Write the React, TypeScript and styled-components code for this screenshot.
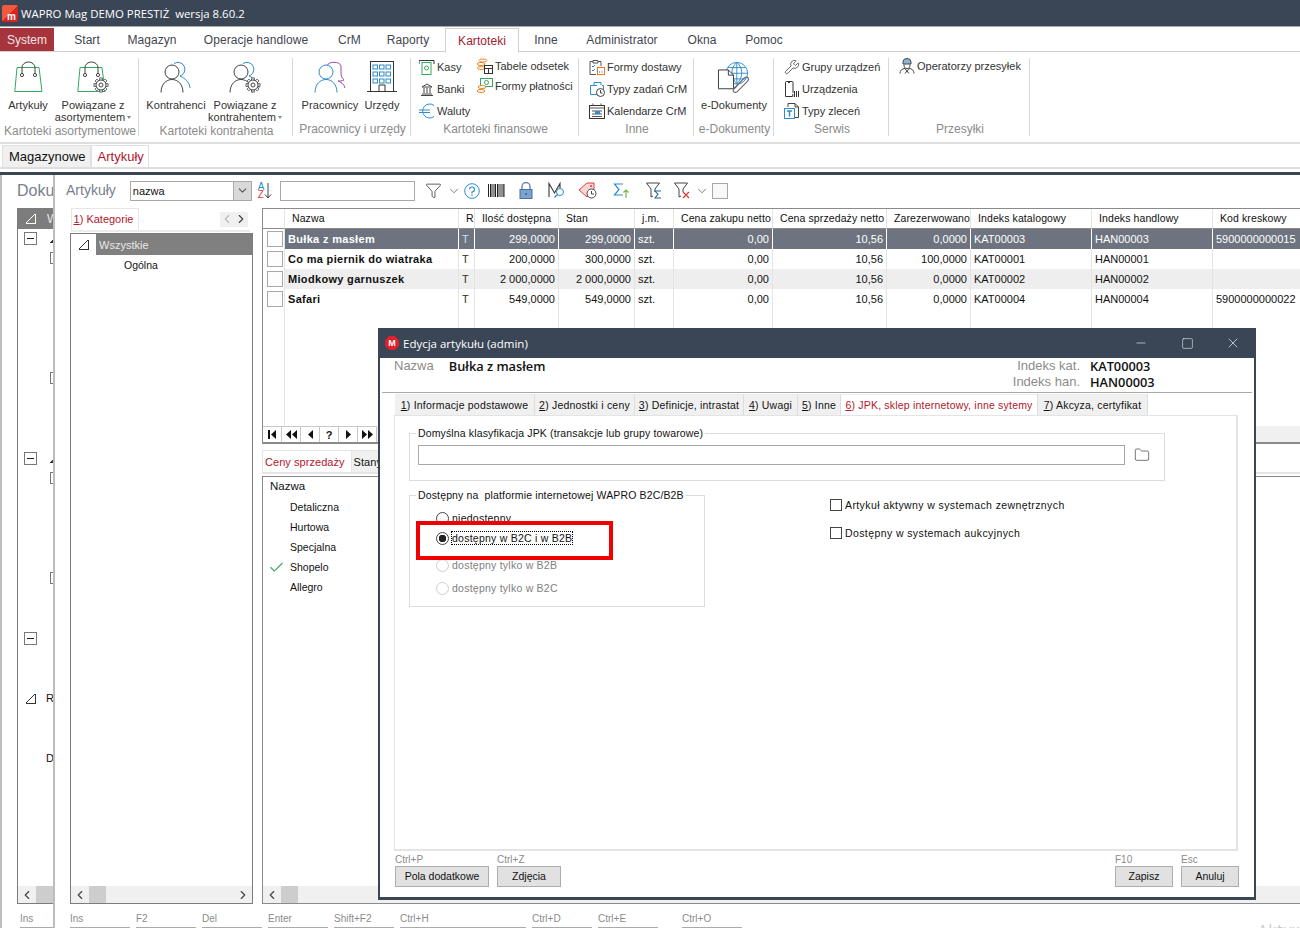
import React from "react";
import styled, { createGlobalStyle, css } from "styled-components";
import { Check, ChevronDown, ChevronLeft, ChevronRight, Folder, Funnel, Minus, Square, Wrench, X } from "lucide-react";

const Global = createGlobalStyle`
  html, body { margin: 0; padding: 0; background: #fff; }
  * { box-sizing: border-box; }
  body { font-family: "Liberation Sans", Arial, sans-serif; font-size: 11px; color: #111; }
`;

const DARK = "#3a4656";
const UI = `"Open Sans", "Liberation Sans", sans-serif`;

const Page = styled.div`
  position: relative;
  width: 1300px;
  height: 928px;
  overflow: hidden;
  display: flex;
  flex-direction: column;
  background: #fff;
`;

const TitleBar = styled.div`
  height: 27px;
  flex: none;
  background: ${DARK};
  border-bottom: 1px solid #a9a9a9;
  color: #fff;
  display: flex;
  align-items: center;
  gap: 3px;
  padding-left: 2px;
  font: 11.4px ${UI};
`;

const AppLogo = styled.span`
  width: 16px;
  height: 17px;
  border-radius: 2px;
  background: linear-gradient(135deg, #ef5a3c 50%, #d92222 50%);
  color: #fff;
  font: bold 10px "Liberation Sans", sans-serif;
  display: flex;
  align-items: flex-end;
  justify-content: flex-end;
  padding: 0 2px;
`;

const MenuBar = styled.div`
  height: 25px;
  flex: none;
  display: flex;
  border-bottom: 1px solid #d0d0d0;
  font: 12px "Liberation Sans", sans-serif;
  letter-spacing: 0.05px;
  color: #3f4650;
  padding-top: 1px;
`;

const MenuItem = styled.div<{ $x: number; $active?: boolean; $system?: boolean }>`
  flex: none;
  width: ${(p) => p.$x}px;
  display: flex;
  align-items: center;
  justify-content: center;
  ${(p) =>
    p.$active &&
    css`
      color: #a11c30;
      border: 1px solid #d0d0d0;
      border-bottom: 1px solid #fff;
      height: 25px;
      background: #fff;
    `}
  ${(p) =>
    p.$system &&
    css`
      background: #a5343c;
      color: #f3e3e3;
      height: 23px;
      letter-spacing: 0;
    `}
`;

const Ribbon = styled.div`
  height: 92px;
  flex: none;
  display: flex;
  padding-top: 6px;
  border-bottom: 2px solid #dedede;
`;

const RibbonGroup = styled.div<{ $w: number }>`
  flex: none;
  width: ${(p) => p.$w}px;
  height: 78px;
  border-right: 1px solid #d8d8d8;
  display: flex;
  flex-direction: column;
`;

const GroupBody = styled.div<{ $pl?: number; $pt?: number }>`
  height: 64px;
  display: flex;
  padding-left: ${(p) => p.$pl ?? 0}px;
  padding-top: ${(p) => p.$pt ?? 0}px;
`;

const GroupLabel = styled.div`
  height: 14px;
  margin-top: 2px;
  padding-left: 2px;
  text-align: center;
  white-space: nowrap;
  color: #8b8b8b;
  font: 12px "Liberation Sans", sans-serif;
`;

const BigItem = styled.div<{ $w: number }>`
  flex: none;
  width: ${(p) => p.$w}px;
  display: flex;
  flex-direction: column;
  align-items: center;
  white-space: nowrap;
  color: #333;
  font-size: 11px;
  line-height: 12px;
  letter-spacing: 0.06px;
  svg.big { height: 32px; margin: 3px 0 6px; flex: none; }
`;

const Caret = styled.span`
  display: inline-block;
  margin-left: 2px;
  vertical-align: 2px;
  border: 2.5px solid transparent;
  border-top: 3px solid #888;
  border-bottom: 0;
`;

const SmallStack = styled.div<{ $step?: number; $w?: number; $pt?: number }>`
  display: flex;
  flex-direction: column;
  flex: none;
  gap: ${(p) => p.$step ?? 6}px;
  padding-top: ${(p) => p.$pt ?? 0}px;
  ${(p) => p.$w && `width: ${p.$w}px;`}
`;

const SmallItem = styled.div`
  height: 16px;
  display: flex;
  align-items: center;
  gap: 2px;
  white-space: nowrap;
  color: #333;
  font-size: 11px;
  svg { flex: none; width: 16px; height: 16px; }
`;

const TabStrip = styled.div`
  height: 25px;
  flex: none;
  display: flex;
  align-items: flex-end;
  border-bottom: 2px solid #dedede;
  padding-left: 2px;
`;

const TopTab = styled.div<{ $active?: boolean }>`
  height: 22px;
  padding: 0 4px 0 6px;
  display: flex;
  align-items: center;
  font: 13px "Liberation Sans", sans-serif;
  color: ${(p) => (p.$active ? "#b3152c" : "#111")};
  background: ${(p) => (p.$active ? "#fff" : "#f0f0f0")};
  border: 1px solid #e0e0e0;
  border-bottom: 0;
`;

const DarkRule = styled.div`
  height: 6px;
  flex: none;
  background: linear-gradient(#fff 0, #fff 3px, ${DARK} 3px);
`;

const Main = styled.div`
  flex: 1;
  min-height: 0;
  display: flex;
`;

const DocPanel = styled.div`
  width: 53px;
  flex: none;
  display: flex;
  flex-direction: column;
  border-left: 2px solid #bdbdbd;
  padding-left: 15px;
  overflow: hidden;
`;

const PanelTitle = styled.div`
  height: 33px;
  flex: none;
  display: flex;
  align-items: center;
  font: 16px "Liberation Sans", sans-serif;
  color: #78808c;
  white-space: nowrap;
  padding-bottom: 2px;
`;

const ArticlesTitle = styled(PanelTitle)`
  font-size: 14px;
`;

const DocTree = styled.div`
  height: 696px;
  flex: none;
  width: 46px;
  border: 1px solid #7c7c7c;
  display: flex;
  flex-direction: column;
`;

const DocHead = styled.div`
  height: 20px;
  flex: none;
  background: #7d7d7d;
  color: #e9e9e9;
  display: flex;
  align-items: center;
  padding-left: 8px;
  gap: 11px;
  font-size: 12px;
  white-space: nowrap;
`;

const Corner = styled.span<{ $dark?: boolean }>`
  display: inline-block;
  width: 10px;
  height: 10px;
  flex: none;
  background: linear-gradient(135deg, transparent 46%, ${(p) => (p.$dark ? "#333" : "#fff")} 46%, ${(p) => (p.$dark ? "#333" : "#fff")} 54%, transparent 54%);
  border-bottom: 1px solid ${(p) => (p.$dark ? "#333" : "#fff")};
  border-right: 1px solid ${(p) => (p.$dark ? "#333" : "#fff")};
`;

const TreeCorner = styled(Corner)<{ $y: number }>`
  position: absolute;
  left: 8px;
  top: ${(p) => p.$y}px;
`;

const DocBody = styled.div`
  flex: 1;
  position: relative;
`;

const Expander = styled.span<{ $y: number }>`
  position: absolute;
  left: 6px;
  top: ${(p) => p.$y}px;
  width: 13px;
  height: 13px;
  border: 1px solid #777;
  background: #fff;
  &::after {
    content: "";
    position: absolute;
    left: 2px;
    right: 2px;
    top: 5px;
    height: 1px;
    background: #222;
  }
`;

const TinyBox = styled.span<{ $y: number }>`
  position: absolute;
  left: 32px;
  top: ${(p) => p.$y}px;
  width: 12px;
  height: 12px;
  border: 1px solid #777;
`;

const Notch = styled.span<{ $y: number }>`
  position: absolute;
  left: 31px;
  top: ${(p) => p.$y}px;
  width: 4px;
  height: 3px;
  background: linear-gradient(135deg, transparent 50%, #333 50%);
`;

const TreeLetter = styled.span<{ $y: number; $x: number }>`
  position: absolute;
  left: ${(p) => p.$x}px;
  top: ${(p) => p.$y}px;
  font-size: 11px;
`;

const ScrollBar = styled.div`
  height: 17px;
  flex: none;
  background: #f0f0f0;
  display: flex;
  align-items: center;
  color: #444;
  svg { width: 14px; height: 14px; flex: none; margin: 0 2px; }
`;

const Thumb = styled.span`
  width: 17px;
  height: 17px;
  flex: none;
  background: #cdcdcd;
`;

const Spacer = styled.span`
  flex: 1;
`;

const ArticlesPanel = styled.div`
  flex: 1;
  min-width: 0;
  display: flex;
  flex-direction: column;
  border-left: 2px solid #bdbdbd;
`;

const Toolbar = styled.div`
  height: 33px;
  flex: none;
  display: flex;
  align-items: center;
  padding: 0 0 2px 11px;
  white-space: nowrap;
`;

const ToolIcon = styled.span<{ $l: number }>`
  margin-left: ${(p) => p.$l}px;
  display: flex;
  flex: none;
  svg { display: block; }
`;

const SelectBox = styled.div`
  width: 122px;
  height: 20px;
  margin-left: 14px;
  border: 1px solid #a8a8a8;
  display: flex;
  align-items: center;
  justify-content: space-between;
  padding-left: 2px;
  font-size: 11px;
`;

const SelectArrow = styled.span`
  width: 18px;
  height: 18px;
  background: #d9d9d9;
  border-left: 1px solid #aaa;
  display: flex;
  align-items: center;
  justify-content: center;
  svg { width: 13px; height: 13px; color: #555; }
`;

const SortIcon = styled.span`
  margin-left: 6px;
  width: 16px;
  display: flex;
  align-items: center;
  gap: 0;
`;

const SortLetters = styled.span`
  display: flex;
  flex-direction: column;
  font-size: 10px;
  line-height: 8px;
  color: #2d8ccb;
  b { font-weight: normal; color: #e23b3b; }
`;

const SearchBox = styled.div`
  width: 135px;
  height: 20px;
  margin-left: 6px;
  border: 1px solid #a8a8a8;
`;

const EmptyCheck = styled.span`
  margin-left: 3px;
  width: 16px;
  height: 16px;
  border: 1px solid #a8a8a8;
  background: #f8f8f8;
  flex: none;
`;

const Content = styled.div`
  height: 696px;
  flex: none;
  display: flex;
  padding-left: 15px;
`;

const CategoryColumn = styled.div`
  width: 183px;
  flex: none;
  display: flex;
  flex-direction: column;
`;

const CategoryTabs = styled.div`
  height: 24px;
  flex: none;
  display: flex;
  align-items: flex-start;
  justify-content: space-between;
  margin: 0 3px 1px 1px;
  border-bottom: 2px solid #ececec;
`;

const CategoryTab = styled.div`
  height: 22px;
  width: 68px;
  display: flex;
  align-items: center;
  justify-content: center;
  padding: 0 3px 2px 0;
  color: #b3152c;
  font-size: 11px;
  border: 1px solid #e6e6e6;
  border-bottom: 0;
  background: #fff;
`;

const TabArrows = styled.div`
  margin: 4px 2px 0 0;
  width: 28px;
  height: 15px;
  background: #f0f0f0;
  display: flex;
  justify-content: space-between;
  svg { width: 14px; height: 14px; }
`;

const CategoryTree = styled.div`
  flex: 1;
  border: 1px solid #7c7c7c;
  display: flex;
  flex-direction: column;
`;

const TreeRoot = styled.div`
  height: 21px;
  flex: none;
  display: flex;
  align-items: center;
  padding-left: 8px;
`;

const TreeRootLabel = styled.div`
  margin-left: 7px;
  flex: 1;
  height: 21px;
  background: #808080;
  color: #e8e8e8;
  display: flex;
  align-items: center;
  padding-left: 3px;
  font-size: 11px;
`;

const TreeLeaf = styled.div`
  height: 19px;
  flex: none;
  display: flex;
  align-items: center;
  padding-left: 53px;
  font-size: 10.5px;
`;

const GridColumn = styled.div`
  margin-left: 9px;
  flex: 1;
  min-width: 0;
  display: flex;
  flex-direction: column;
`;

const COLS = "22px 174px 16px 84px 76px 39px 99px 114px 84px 121px 121px 100px";

const ArticleTable = styled.div`
  height: 218px;
  flex: none;
  border: 1px solid #8b8b8b;
  border-width: 1px 0 0 1px;
  display: grid;
  grid-template-rows: 20px 20px 20px 20px 20px 1fr;
  overflow: hidden;
`;

const TableRow = styled.div<{ $tone?: "sel" | "alt" }>`
  display: grid;
  grid-template-columns: ${COLS};
  min-width: 0;
  ${(p) => p.$tone === "alt" && "background: #eee;"}
`;

const HeadCell = styled.div`
  border-right: 1px solid #e4e4e0;
  border-bottom: 1px solid #8b8b8b;
  padding: 0 0 2px 7px;
  display: flex;
  align-items: center;
  white-space: nowrap;
  overflow: hidden;
  font-size: 10.5px;
  letter-spacing: 0.1px;
  color: #111;
`;

const Cell = styled.div<{ $right?: boolean; $sel?: boolean; $tint?: string }>`
  border-right: 1px solid ${(p) => (p.$sel ? "#fff" : "#e4e4e0")};
  padding: 0 3px;
  display: flex;
  align-items: center;
  justify-content: ${(p) => (p.$right ? "flex-end" : "flex-start")};
  white-space: nowrap;
  overflow: hidden;
  font-size: 11px;
  color: ${(p) => p.$tint ?? (p.$sel ? "#fff" : "#111")};
  background: ${(p) => (p.$sel ? "#6d7480" : "transparent")};
`;

const NameCell = styled(Cell)`
  font-weight: bold;
  letter-spacing: 0.32px;
`;

const MarkCell = styled.div`
  border-right: 1px solid #e4e4e0;
  background: #fff;
  display: flex;
  align-items: center;
  justify-content: center;
  padding-left: 2px;
  span {
    width: 16px;
    height: 16px;
    border: 1px solid #a8a8a8;
    background: #fdfdfd;
  }
`;

const Navigator = styled.div`
  height: 18px;
  flex: none;
  border-left: 1px solid #8b8b8b;
  border-bottom: 2px solid #8b8b8b;
  background: #f0f0f0;
  display: flex;
`;

const NavButton = styled.div`
  width: 19px;
  background: #fff;
  border-right: 1px solid #c8c8c8;
  border-top: 1px solid #c8c8c8;
  display: flex;
  align-items: center;
  justify-content: center;
  font: bold 11px "Liberation Sans", sans-serif;
  svg { display: block; }
`;

const SubTabs = styled.div`
  margin-top: 6px;
  height: 24px;
  flex: none;
  display: flex;
  border-bottom: 2px solid #e4e4e4;
  align-items: stretch;
`;

const SubTab = styled.div<{ $active?: boolean }>`
  padding: 0 6px 0 2px;
  display: flex;
  align-items: center;
  font-size: 11px;
  letter-spacing: 0.05px;
  white-space: nowrap;
  color: ${(p) => (p.$active ? "#b3152c" : "#111")};
  background: ${(p) => (p.$active ? "#fff" : "#f0f0f0")};
  border: 1px solid #e4e4e4;
  border-bottom: 0;
  ${(p) => !p.$active && "border-left: 0;"}
`;

const PriceList = styled.div`
  flex: 1;
  margin-top: 2px;
  border: 1px solid #8b8b8b;
  border-right: 0;
  display: flex;
  flex-direction: column;
`;

const PriceHead = styled.div`
  height: 20px;
  flex: none;
  padding: 0 0 3px 7px;
  display: flex;
  align-items: center;
  font-size: 11.5px;
`;

const PriceRow = styled.div`
  height: 20px;
  flex: none;
  display: flex;
  align-items: center;
  font-size: 10.5px;
  color: #111;
`;

const CheckSlot = styled.span`
  width: 27px;
  flex: none;
  display: flex;
  justify-content: center;
  svg { width: 17px; height: 17px; color: #2eab5f; }
`;

const Shortcuts = styled.div<{ $pl?: number }>`
  flex: 1;
  display: flex;
  padding: 9px 0 0 ${(p) => p.$pl ?? 0}px;
`;

const Shortcut = styled.div<{ $w: number; $btn: number; $down?: boolean }>`
  flex: none;
  width: ${(p) => p.$w}px;
  color: #8b8b8b;
  font-size: 10px;
  line-height: 12px;
  &::after {
    content: "";
    display: block;
    margin-top: 2px;
    width: ${(p) => p.$btn}px;
    height: 10px;
    background: ${(p) => (p.$down ? "#cfcfcf" : "#e2e2e2")};
    border: 1px solid #aaa;
  }
`;

const Watermark = styled.div`
  position: absolute;
  left: 1258px;
  top: 919px;
  font: 15px "Open Sans", sans-serif;
  letter-spacing: 1px;
  color: #c8c8c8;
`;

const Dialog = styled.div`
  position: absolute;
  left: 378px;
  top: 328px;
  width: 878px;
  height: 572px;
  background: #fff;
  border: 2px solid ${DARK};
  border-top: 0;
  border-bottom-width: 3px;
  display: flex;
  flex-direction: column;
`;

const DialogTitle = styled.div`
  height: 30px;
  flex: none;
  margin: 0 -2px;
  background: ${DARK};
  color: #fff;
  display: flex;
  align-items: center;
  padding-left: 7px;
  gap: 4px;
  font: 11.5px ${UI};
`;

const DialogLogo = styled.span`
  width: 14px;
  height: 14px;
  background: #e0202c;
  clip-path: polygon(30% 0, 70% 0, 100% 30%, 100% 70%, 70% 100%, 30% 100%, 0 70%, 0 30%);
  color: #fff;
  font: bold 9px "Liberation Sans", sans-serif;
  display: flex;
  align-items: center;
  justify-content: center;
`;

const WindowButtons = styled.div`
  margin-left: auto;
  display: flex;
  align-items: center;
  color: #fff;
`;

const WindowButton = styled.span`
  width: 46px;
  display: flex;
  justify-content: center;
  svg { display: block; }
`;

const DialogHead = styled.div`
  height: 35px;
  flex: none;
  margin: 0 2px;
  border-bottom: 1px solid #a9a9a9;
  display: flex;
  justify-content: space-between;
  padding: 0 0 0 12px;
`;

const NameLine = styled.div`
  display: flex;
  align-items: flex-start;
  gap: 15px;
`;

const HeadCaption = styled.span`
  font: 13px "Liberation Sans", sans-serif;
  line-height: 16px;
  color: #8b8b8b;
`;

const HeadValue = styled.span`
  font: 600 12.8px "Open Sans", sans-serif;
  line-height: 17px;
  color: #111;
`;

const IndexTable = styled.div`
  display: grid;
  grid-template-columns: auto 162px;
  column-gap: 10px;
  justify-items: end;
  grid-auto-rows: 16px;
  span:nth-child(2n) { justify-self: start; }
`;

const DialogTabs = styled.div`
  height: 21px;
  flex: none;
  margin: 1px 0 0 15px;
  display: flex;
`;

const DialogTab = styled.div<{ $w: number; $active?: boolean }>`
  flex: none;
  width: ${(p) => p.$w}px;
  display: flex;
  align-items: center;
  justify-content: center;
  white-space: nowrap;
  font-size: 10.5px;
  letter-spacing: 0.2px;
  color: ${(p) => (p.$active ? "#b3152c" : "#111")};
  background: ${(p) => (p.$active ? "#fff" : "#f0f0f0")};
  border-right: 1px solid #ddd;
  border-top: 1px solid #ececec;
  u { text-underline-offset: 1px; }
`;

const TabPage = styled.div`
  height: 436px;
  flex: none;
  margin: 0 16px 0 14px;
  border: 2px solid #e4e4e4;
  border-width: 1px 2px 2px 1px;
  padding: 11px 0 0 14px;
`;

const GroupBox = styled.fieldset<{ $w: number; $h: number }>`
  margin: 0;
  width: ${(p) => p.$w}px;
  height: ${(p) => p.$h}px;
  padding: 0;
  border: 1px solid #dcdcdc;
  min-inline-size: 0;
  legend {
    margin-left: 6px;
    padding: 0 2px;
    font-size: 10.5px;
    line-height: 13px;
    letter-spacing: 0.14px;
    color: #111;
    white-space: pre;
  }
`;

const PathRow = styled.div`
  display: flex;
  align-items: center;
  padding: 5px 0 0 8px;
  gap: 9px;
  svg { width: 16px; height: 16px; color: #333; }
`;

const PathInput = styled.div`
  width: 707px;
  height: 20px;
  border: 1px solid #a8a8a8;
`;

const LowerRow = styled.div`
  display: flex;
  margin-top: 8px;
`;

const RadioColumn = styled.div`
  padding: 9px 0 0 26px;
  display: flex;
  flex-direction: column;
`;

const RadioLine = styled.div<{ $mt?: number; $off?: boolean }>`
  height: 14px;
  margin-top: ${(p) => p.$mt ?? 0}px;
  display: flex;
  align-items: center;
  gap: 3px;
  white-space: nowrap;
  font-size: 10.5px;
  letter-spacing: 0.24px;
  color: ${(p) => (p.$off ? "#808080" : "#111")};
`;

const RadioDot = styled.span<{ $on?: boolean; $off?: boolean }>`
  width: 13px;
  height: 13px;
  flex: none;
  border-radius: 50%;
  border: 1px solid ${(p) => (p.$off ? "#cfcfcf" : "#444")};
  background: ${(p) => (p.$on ? "radial-gradient(circle, #222 0 3.5px, #fff 4px)" : "#fff")};
`;

const FocusText = styled.span`
  outline: 1px dotted #000;
`;

const CheckColumn = styled.div`
  margin-left: 125px;
  padding-top: 10px;
  display: flex;
  flex-direction: column;
  gap: 16px;
`;

const CheckLine = styled.div`
  height: 12px;
  display: flex;
  align-items: center;
  gap: 3px;
  font-size: 10.5px;
  letter-spacing: 0.4px;
  color: #111;
  white-space: nowrap;
  span {
    width: 12px;
    height: 12px;
    border: 1px solid #444;
  }
`;

const Callout = styled.div`
  position: absolute;
  left: 36px;
  top: 193px;
  width: 197px;
  height: 39px;
  border: 4px solid #f00000;
  pointer-events: none;
`;

const DialogFooter = styled.div`
  flex: 1;
  display: flex;
  padding: 2px 15px 0 15px;
  gap: 8px;
`;

const FooterAction = styled.div`
  display: flex;
  flex-direction: column;
  color: #8b8b8b;
  font-size: 10px;
  line-height: 13px;
`;

const ActionButton = styled.div<{ $w: number }>`
  width: ${(p) => p.$w}px;
  height: 21px;
  background: #e1e1e1;
  border: 1px solid #adadad;
  color: #111;
  font-size: 10.5px;
  display: flex;
  align-items: center;
  justify-content: center;
`;

const Line: React.FC<{ d: string; c?: string; w?: number }> = ({ d, c = "#444", w = 1 }) => (
  <path d={d} fill="none" stroke={c} strokeWidth={w} />
);

const Gear: React.FC<{ x: number; y: number }> = ({ x, y }) => (
  <g transform={`translate(${x} ${y})`}>
    {[0, 45, 90, 135].map((a) => (
      <rect key={a} x={-1.3} y={-7} width={2.6} height={14} fill="#fff" stroke="#444" strokeWidth={0.8} transform={`rotate(${a})`} />
    ))}
    <circle r={5} fill="#fff" stroke="#444" />
    <circle r={2} fill="#fff" stroke="#444" />
  </g>
);

const Bag: React.FC<{ gear?: boolean }> = ({ gear }) => (
  <svg className="big" width={gear ? 32 : 29} height="32" viewBox={`0 0 ${gear ? 32 : 29} 32`}>
    <path d="M3 6.500H25L28 30.500H0.800Z" fill="#fff" stroke="#2eab5f" />
    <Line d="M8 13V6.500a6.500 5.500 0 0 1 13 0V13" />
    <circle cx="8" cy="14" r="1.600" fill="#fff" stroke="#444" />
    <circle cx="21" cy="14" r="1.600" fill="#fff" stroke="#444" />
    {gear && <Gear x={24} y={24} />}
  </svg>
);

const Person: React.FC<{ c: string }> = ({ c }) => (
  <g>
    <circle cx="12" cy="11" r="7" fill="#fff" stroke={c} />
    <path d="M1 31.500c0-8 5-13 11-13s11 5 11 13" fill="none" stroke={c} />
  </g>
);

const People: React.FC<{ gear?: boolean }> = ({ gear }) => (
  <svg className="big" width="32" height="32" viewBox="0 0 32 32">
    <Line d="M14 2.500a7 7 0 1 1 6 12.500c5 2 10 7 10 12" c="#2d8ccb" />
    <Person c="#444" />
    {gear && <Gear x={24} y={24} />}
  </svg>
);

const Staff = () => (
  <svg className="big" width="32" height="32" viewBox="0 0 32 32">
    <Line d="M13 5c1-5 13-5 14 0v7c0 3 1 5 3 7-2 1-4 1-6 1 3 1 6 3 7 7" c="#9b4d9b" />
    <Person c="#2d8ccb" />
  </svg>
);

const Building = () => (
  <svg className="big" width="30" height="32" viewBox="0 0 30 32">
    <rect x="3.500" y="0.500" width="23" height="30" fill="none" stroke="#333" />
    <Line d="M0 30.500H30M12 30.500V24H18V30.500" c="#333" />
    {[4, 11, 18].map((y) =>
      [6, 12.5, 19].map((x) => <rect key={`${x}${y}`} x={x} y={y} width="4.500" height="4" fill="none" stroke="#2d8ccb" />),
    )}
  </svg>
);

const Kasy = () => (
  <svg viewBox="0 0 16 16">
    <Line d="M0 1.500H15M0 1.500V5M15 1.500V5" c="#333" />
    <rect x="3" y="3.500" width="9" height="12" fill="none" stroke="#2eab5f" />
    <circle cx="7.500" cy="9" r="2" fill="none" stroke="#2eab5f" />
  </svg>
);
const Banki = () => (
  <svg viewBox="0 0 16 16">
    <Line d="M3 6 8 3l5 3H3ZM3 13h10M2 14.500h12M5 7v5M8 7v5M11 7v5" />
  </svg>
);
const Euro = () => (
  <svg viewBox="0 0 16 16">
    <Line d="M15 2.500A7 7 0 1 0 15 13.500M0 7H11M0 9.500H11" c="#2d8ccb" />
  </svg>
);
const Coins = () => (
  <svg viewBox="0 0 16 16">
    <ellipse cx="6" cy="2.500" rx="4" ry="1.500" fill="none" stroke="#e88a2a" />
    <ellipse cx="4" cy="6" rx="4" ry="1.500" fill="none" stroke="#e88a2a" />
    <ellipse cx="4" cy="10" rx="3.500" ry="1.500" fill="none" stroke="#e88a2a" />
    <rect x="7.500" y="7.500" width="8" height="8" fill="#fff" stroke="#333" />
    <Line d="M7.500 10.500H15.500M11.500 10.500V15.500" c="#333" />
  </svg>
);
const CashCoins = () => (
  <svg viewBox="0 0 16 16">
    <rect x="3.500" y="0.500" width="12" height="8" fill="none" stroke="#2eab5f" />
    <circle cx="9.500" cy="4.500" r="2" fill="none" stroke="#2eab5f" />
    <ellipse cx="5" cy="9" rx="4" ry="1.500" fill="#fff" stroke="#e88a2a" />
    <ellipse cx="4" cy="13" rx="4" ry="1.500" fill="#fff" stroke="#e88a2a" />
  </svg>
);
const Delivery = () => (
  <svg viewBox="0 0 16 16">
    <Line d="M9 2.500H12V7M4 2.500H1V15.500H7M4 1.500H9V4H4Z" c="#555" />
    <Line d="M3 7l1 1 2-2M3 11l1 1 2-2" c="#2d8ccb" />
    <rect x="8.500" y="8.500" width="7" height="7" fill="#fff" stroke="#e8792a" />
    <Line d="M10 13h1M12.500 13h1" c="#555" />
  </svg>
);
const TaskTypes = () => (
  <svg viewBox="0 0 16 16">
    <Line d="M5 4V1.500H12V4M8 4.500H1.500V13.500H8M13 4.500H14.500V8" c="#2d8ccb" />
    <circle cx="11.500" cy="11.500" r="4" fill="#fff" stroke="#444" />
    <Line d="M11.500 9v3h2" />
  </svg>
);
const Calendar = () => (
  <svg viewBox="0 0 16 16">
    <rect x="0.500" y="2.500" width="15" height="13" fill="#fff" stroke="#333" />
    <Line d="M0.500 5H15.500M4 0.500V3M12 0.500V3M3 8H13M3 11H13M3 13.500H13" c="#555" />
    <rect x="6" y="8" width="5" height="3" fill="#2d8ccb" />
  </svg>
);
const DeviceBars = () => (
  <svg viewBox="0 0 16 16">
    <Line d="M9 12V1.500a1 1 0 0 0-1-1H2.500a1 1 0 0 0-1 1V15.500H8M4 1.500h2" c="#333" />
    <Line d="M10.500 10V16M12.500 10V16M14.500 10V16M8.800 13V16" c="#333" />
  </svg>
);
const Orders = () => (
  <svg viewBox="0 0 16 16">
    <Line d="M4 4V0.500H11L14.500 4V14.500H11M11 .5V4H14.500" />
    <rect x="0.500" y="5.500" width="10" height="10" fill="#fff" stroke="#2d8ccb" />
    <Line d="M3 8h5M5.500 8V13.500" c="#2d8ccb" w={1.500} />
  </svg>
);
const Courier = () => (
  <svg viewBox="0 0 16 16">
    <path d="M4 4a4 3.500 0 0 1 8 0v2H4Z" fill="#8fb5d6" stroke="#444" />
    <Line d="M5 6.500c0 3 1 4 3 4s3-1 3-4M1 15.500c0-3 2-5 5-5l2 3 2-3c3 0 5 2 5 5M6 15.500 8 13l2 2.500" />
  </svg>
);
const EDoc = () => (
  <svg className="big" width="36" height="32" viewBox="0 0 36 34">
    <circle cx="21" cy="13" r="11.500" fill="none" stroke="#2d8ccb" />
    <Line d="M21 1.500V24M9.500 13H32.500M21 1.500c-7 6-7 16 0 22.500M21 1.500c7 6 7 16 0 22.500M11.500 7H30.500M11.500 19H30.500" c="#2d8ccb" />
    <path d="M1.500 9.500H12L17.500 15V29.500H1.500Z" fill="#fff" stroke="#333" />
    <Line d="M12 9.500V15H17.500" c="#333" />
    <Line d="M18 30 29 18c3-3 6 1 3 4L21 33c-3 1-5-1-3-4L27 20" c="#666" w={1.200} />
  </svg>
);

const Barcode = () => (
  <svg width="17" height="15" viewBox="0 0 17 15">
    {[0.5, 2.5, 4, 6, 7.5, 9.5, 11, 13, 15, 16].map((x) => (
      <line key={x} x1={x} x2={x} y1="1" y2="14" stroke="#222" />
    ))}
  </svg>
);
const Help = () => (
  <svg width="16" height="16" viewBox="0 0 16 16">
    <circle cx="8" cy="8" r="7.300" fill="none" stroke="#2d8ccb" />
    <Line d="M5.500 6.200A2.500 2.500 0 1 1 8 9V10.500M8 11.500V13" c="#2d8ccb" w={1.200} />
  </svg>
);
const Padlock = () => (
  <svg width="14" height="17" viewBox="0 0 14 17">
    <Line d="M3 8V4.500a4 4 0 0 1 8 0V8" c="#5b7fb0" w={1.300} />
    <rect x="1" y="7.500" width="12" height="9" fill="#7ea2cf" stroke="#4b6fa0" />
    <rect x="6" y="11" width="2" height="2" fill="#4b6fa0" />
  </svg>
);
const MLens = () => (
  <svg width="18" height="17" viewBox="0 0 18 17">
    <Line d="M1 15V1.500L6.500 11 12 1.500V7" c="#333" w={1.100} />
    <circle cx="12" cy="10" r="3.500" fill="#fff" stroke="#2d8ccb" />
    <Line d="M9.500 12.500 6.500 15.500" c="#2d8ccb" w={1.300} />
  </svg>
);
const TagClock = () => (
  <svg width="19" height="17" viewBox="0 0 19 17">
    <path d="M1 8 9 1h7v7l-7 7Z" fill="#fbd6d6" stroke="#e23b3b" />
    <circle cx="13" cy="4" r="1" fill="#e23b3b" />
    <circle cx="13.500" cy="11.500" r="4.500" fill="#fff" stroke="#444" />
    <Line d="M13.500 9v3h2.500" />
  </svg>
);
const SigmaUp = () => (
  <svg width="17" height="17" viewBox="0 0 17 17">
    <Line d="M10 2H1.500L6 7.500 1.500 13H10" c="#2d8ccb" w={1.200} />
    <Line d="M13 16V8M10.500 10.500 13 8l2.500 2.500" c="#6db33f" w={1.100} />
  </svg>
);
const FunnelMark: React.FC<{ variant: "sigma" | "cross" }> = ({ variant }) => (
  <svg width="16" height="17" viewBox="0 0 16 17">
    <Line d="M0.500 1H13.500L9 7V10M0.500 1 5 7V15L7 14" />
    {variant === "sigma" ? (
      <Line d="M15 9H9L12 12.300 9 16H15" c="#1f6d8c" w={1.100} />
    ) : (
      <Line d="M9 10 15 16M15 10 9 16" c="#e23b3b" w={1.300} />
    )}
  </svg>
);
const NavGlyph: React.FC<{ d: string; bar?: boolean }> = ({ d, bar }) => (
  <svg width="11" height="9" viewBox="0 0 11 9">
    <path d={d} fill="#111" />
    {bar && <rect x="1" y="0" width="2" height="9" fill="#111" />}
  </svg>
);

type RowData = [string, string, string, string, string, string, string, string, string, string];
const rows: RowData[] = [
  ["Bułka z masłem", "299,0000", "299,0000", "0,00", "10,56", "0,0000", "KAT00003", "HAN00003", "5900000000015", "sel"],
  ["Co ma piernik do wiatraka", "200,0000", "300,0000", "0,00", "10,56", "100,0000", "KAT00001", "HAN00001", "", ""],
  ["Miodkowy garnuszek", "2 000,0000", "2 000,0000", "0,00", "10,56", "0,0000", "KAT00002", "HAN00002", "", "alt"],
  ["Safari", "549,0000", "549,0000", "0,00", "10,56", "0,0000", "KAT00004", "HAN00004", "5900000000022", ""],
];

const columns = ["", "Nazwa", "R", "Ilość dostępna", "Stan", "j.m.", "Cena zakupu netto", "Cena sprzedaży netto", "Zarezerwowano", "Indeks katalogowy", "Indeks handlowy", "Kod kreskowy"];

const menu: [string, number][] = [
  ["Start", 66],
  ["Magazyn", 64],
  ["Operacje handlowe", 144],
  ["CrM", 43],
  ["Raporty", 74],
];
const menuTail: [string, number][] = [
  ["Inne", 54],
  ["Administrator", 98],
  ["Okna", 62],
  ["Pomoc", 62],
];

const shortcuts: [string, number, number][] = [
  ["Ins", 66, 58],
  ["F2", 66, 58],
  ["Del", 66, 58],
  ["Enter", 66, 58],
  ["Shift+F2", 66, 58],
  ["Ctrl+H", 132, 124],
  ["Ctrl+D", 66, 58],
  ["Ctrl+E", 84, 58],
  ["Ctrl+O", 66, 58],
];

const tabs: [React.ReactNode, number, boolean?][] = [
  [<><u>1</u>) Informacje podstawowe</>, 140],
  [<><u>2</u>) Jednostki i ceny</>, 100],
  [<><u>3</u>) Definicje, intrastat</>, 109],
  [<><u>4</u>) Uwagi</>, 54],
  [<><u>5</u>) Inne</>, 43],
  [<><u>6</u>) JPK, sklep internetowy, inne sytemy</>, 197, true],
  [<><u>7</u>) Akcyza, certyfikat</>, 110],
];

const App: React.FC = () => (
  <Page>
    <Global />
    <TitleBar>
      <AppLogo>m</AppLogo>
      WAPRO Mag DEMO PRESTIŻ&nbsp; wersja 8.60.2
    </TitleBar>
    <MenuBar>
      <MenuItem $x={54} $system>System</MenuItem>
      {menu.map(([label, w]) => (
        <MenuItem key={label} $x={w}>{label}</MenuItem>
      ))}
      <MenuItem $x={74} $active>Kartoteki</MenuItem>
      {menuTail.map(([label, w]) => (
        <MenuItem key={label} $x={w}>{label}</MenuItem>
      ))}
    </MenuBar>
    <Ribbon>
      <RibbonGroup $w={139}>
        <GroupBody>
          <BigItem $w={56}><Bag />Artykuły</BigItem>
          <BigItem $w={74}><Bag gear />Powiązane z<span>asortymentem<Caret /></span></BigItem>
        </GroupBody>
        <GroupLabel>Kartoteki asortymentowe</GroupLabel>
      </RibbonGroup>
      <RibbonGroup $w={154}>
        <GroupBody $pl={8}>
          <BigItem $w={58}><People />Kontrahenci</BigItem>
          <BigItem $w={80}><People gear />Powiązane z<span>kontrahentem<Caret /></span></BigItem>
        </GroupBody>
        <GroupLabel>Kartoteki kontrahenta</GroupLabel>
      </RibbonGroup>
      <RibbonGroup $w={118}>
        <GroupBody $pl={8}>
          <BigItem $w={58}><Staff />Pracownicy</BigItem>
          <BigItem $w={46}><Building />Urzędy</BigItem>
        </GroupBody>
        <GroupLabel>Pracownicy i urzędy</GroupLabel>
      </RibbonGroup>
      <RibbonGroup $w={168}>
        <GroupBody $pl={8}>
          <SmallStack $w={58} $pt={1}>
            <SmallItem><Kasy />Kasy</SmallItem>
            <SmallItem><Banki />Banki</SmallItem>
            <SmallItem><Euro />Waluty</SmallItem>
          </SmallStack>
          <SmallStack $step={4}>
            <SmallItem><Coins />Tabele odsetek</SmallItem>
            <SmallItem><CashCoins />Formy płatności</SmallItem>
          </SmallStack>
        </GroupBody>
        <GroupLabel>Kartoteki finansowe</GroupLabel>
      </RibbonGroup>
      <RibbonGroup $w={115}>
        <GroupBody $pl={10} $pt={1}>
          <SmallStack>
            <SmallItem><Delivery />Formy dostawy</SmallItem>
            <SmallItem><TaskTypes />Typy zadań CrM</SmallItem>
            <SmallItem><Calendar />Kalendarze CrM</SmallItem>
          </SmallStack>
        </GroupBody>
        <GroupLabel>Inne</GroupLabel>
      </RibbonGroup>
      <RibbonGroup $w={80}>
        <GroupBody>
          <BigItem $w={80}><EDoc />e-Dokumenty</BigItem>
        </GroupBody>
        <GroupLabel>e-Dokumenty</GroupLabel>
      </RibbonGroup>
      <RibbonGroup $w={115}>
        <GroupBody $pl={10} $pt={1}>
          <SmallStack>
            <SmallItem><Wrench strokeWidth={1.2} color="#444" />Grupy urządzeń</SmallItem>
            <SmallItem><DeviceBars />Urządzenia</SmallItem>
            <SmallItem><Orders />Typy zleceń</SmallItem>
          </SmallStack>
        </GroupBody>
        <GroupLabel>Serwis</GroupLabel>
      </RibbonGroup>
      <RibbonGroup $w={141}>
        <GroupBody $pl={10}>
          <SmallItem><Courier />Operatorzy przesyłek</SmallItem>
        </GroupBody>
        <GroupLabel>Przesyłki</GroupLabel>
      </RibbonGroup>
    </Ribbon>
    <TabStrip>
      <TopTab>Magazynowe</TopTab>
      <TopTab $active>Artykuły</TopTab>
    </TabStrip>
    <DarkRule />
    <Main>
      <DocPanel>
        <PanelTitle>Doku</PanelTitle>
        <DocTree>
          <DocHead><Corner />W</DocHead>
          <DocBody>
            <Expander $y={3} />
            <Notch $y={11} />
            <TinyBox $y={23} />
            <TinyBox $y={143} />
            <Expander $y={223} />
            <Notch $y={231} />
            <TinyBox $y={243} />
            <TinyBox $y={343} />
            <Expander $y={403} />
            <TreeCorner $dark $y={465} />
            <TreeLetter $x={28} $y={463}>R</TreeLetter>
            <TreeLetter $x={28} $y={523}>D</TreeLetter>
          </DocBody>
          <ScrollBar><ChevronLeft /><Thumb /></ScrollBar>
        </DocTree>
        <Shortcuts $pl={3}>
          <Shortcut $w={33} $btn={36}>Ins</Shortcut>
        </Shortcuts>
      </DocPanel>
      <ArticlesPanel>
        <Toolbar>
          <ArticlesTitle as="span">Artykuły</ArticlesTitle>
          <SelectBox>nazwa<SelectArrow><ChevronDown /></SelectArrow></SelectBox>
          <SortIcon>
            <SortLetters>A<b>Z</b></SortLetters>
            <svg width="8" height="16" viewBox="0 0 8 16"><Line d="M4 0V15M1 11.500 4 15l3-3.500" /></svg>
          </SortIcon>
          <SearchBox />
          <ToolIcon $l={10}><Funnel size={17} strokeWidth={1.1} color="#333" /></ToolIcon>
          <ToolIcon $l={5}><ChevronDown size={14} strokeWidth={1.2} color="#444" /></ToolIcon>
          <ToolIcon $l={3}><Help /></ToolIcon>
          <ToolIcon $l={8}><Barcode /></ToolIcon>
          <ToolIcon $l={14}><Padlock /></ToolIcon>
          <ToolIcon $l={15}><MLens /></ToolIcon>
          <ToolIcon $l={12}><TagClock /></ToolIcon>
          <ToolIcon $l={16}><SigmaUp /></ToolIcon>
          <ToolIcon $l={16}><FunnelMark variant="sigma" /></ToolIcon>
          <ToolIcon $l={12}><FunnelMark variant="cross" /></ToolIcon>
          <ToolIcon $l={5}><ChevronDown size={14} strokeWidth={1.2} color="#444" /></ToolIcon>
          <EmptyCheck />
        </Toolbar>
        <Content>
          <CategoryColumn>
            <CategoryTabs>
              <CategoryTab><span><u>1</u>) Kategorie</span></CategoryTab>
              <TabArrows>
                <ChevronLeft color="#bbb" />
                <ChevronRight color="#444" />
              </TabArrows>
            </CategoryTabs>
            <CategoryTree>
              <TreeRoot><Corner $dark /><TreeRootLabel>Wszystkie</TreeRootLabel></TreeRoot>
              <TreeLeaf>Ogólna</TreeLeaf>
              <Spacer />
              <ScrollBar>
                <ChevronLeft />
                <Thumb />
                <Spacer />
                <ChevronRight />
              </ScrollBar>
            </CategoryTree>
          </CategoryColumn>
          <GridColumn>
            <ArticleTable>
              <TableRow>
                {columns.map((c, i) => (
                  <HeadCell key={i}>{c}</HeadCell>
                ))}
              </TableRow>
              {rows.map((r) => {
                const sel = r[9] === "sel";
                return (
                  <TableRow key={r[0]} $tone={r[9] === "alt" ? "alt" : undefined}>
                    <MarkCell><span /></MarkCell>
                    <NameCell $sel={sel}>{r[0]}</NameCell>
                    <Cell $sel={sel} $tint={sel ? "#cfe0f0" : "#3a3020"}>T</Cell>
                    <Cell $right $sel={sel}>{r[1]}</Cell>
                    <Cell $right $sel={sel}>{r[2]}</Cell>
                    <Cell $sel={sel}>szt.</Cell>
                    <Cell $right $sel={sel}>{r[3]}</Cell>
                    <Cell $right $sel={sel}>{r[4]}</Cell>
                    <Cell $right $sel={sel}>{r[5]}</Cell>
                    <Cell $sel={sel}>{r[6]}</Cell>
                    <Cell $sel={sel}>{r[7]}</Cell>
                    <Cell $sel={sel}>{r[8]}</Cell>
                  </TableRow>
                );
              })}
              <TableRow>
                {columns.map((c, i) => (
                  <Cell key={i} />
                ))}
              </TableRow>
            </ArticleTable>
            <Navigator>
              <NavButton><NavGlyph d="M9 0V9L4 4.500Z" bar /></NavButton>
              <NavButton><NavGlyph d="M5 0V9L0 4.500ZM11 0V9L6 4.500Z" /></NavButton>
              <NavButton><NavGlyph d="M8 0V9L3 4.500Z" /></NavButton>
              <NavButton>?</NavButton>
              <NavButton><NavGlyph d="M3 0V9L8 4.500Z" /></NavButton>
              <NavButton><NavGlyph d="M0 0V9L5 4.500ZM6 0V9L11 4.500Z" /></NavButton>
            </Navigator>
            <SubTabs>
              <SubTab $active>Ceny sprzedaży</SubTab>
              <SubTab>Stany magazynowe</SubTab>
            </SubTabs>
            <PriceList>
              <PriceHead>Nazwa</PriceHead>
              {["Detaliczna", "Hurtowa", "Specjalna", "Shopelo", "Allegro"].map((n) => (
                <PriceRow key={n}>
                  <CheckSlot>{n === "Shopelo" && <Check strokeWidth={1.5} />}</CheckSlot>
                  {n}
                </PriceRow>
              ))}
              <Spacer />
              <ScrollBar><ChevronLeft /><Thumb /></ScrollBar>
            </PriceList>
          </GridColumn>
        </Content>
        <Shortcuts $pl={15}>
          {shortcuts.map(([label, w, btn]) => (
            <Shortcut key={label} $w={w} $btn={btn} $down={label === "Enter"}>{label}</Shortcut>
          ))}
        </Shortcuts>
      </ArticlesPanel>
    </Main>
    <Watermark>Aktyw</Watermark>
    <Dialog>
      <DialogTitle>
        <DialogLogo>M</DialogLogo>
        Edycja artykułu (admin)
        <WindowButtons>
          <WindowButton><Minus size={14} strokeWidth={1} /></WindowButton>
          <WindowButton><Square size={13} strokeWidth={1} /></WindowButton>
          <WindowButton><X size={16} strokeWidth={1} /></WindowButton>
        </WindowButtons>
      </DialogTitle>
      <DialogHead>
        <NameLine>
          <HeadCaption>Nazwa</HeadCaption>
          <HeadValue>Bułka z masłem</HeadValue>
        </NameLine>
        <IndexTable>
          <HeadCaption>Indeks kat.</HeadCaption>
          <HeadValue>KAT00003</HeadValue>
          <HeadCaption>Indeks han.</HeadCaption>
          <HeadValue>HAN00003</HeadValue>
        </IndexTable>
      </DialogHead>
      <DialogTabs>
        {tabs.map(([label, w, active], i) => (
          <DialogTab key={i} $w={w} $active={active}><span>{label}</span></DialogTab>
        ))}
      </DialogTabs>
      <TabPage>
        <GroupBox $w={756} $h={54}>
          <legend>Domyślna klasyfikacja JPK (transakcje lub grupy towarowe)</legend>
          <PathRow>
            <PathInput />
            <Folder strokeWidth={1} />
          </PathRow>
        </GroupBox>
        <LowerRow>
          <GroupBox $w={296} $h={118}>
            <legend>Dostępny na  platformie internetowej WAPRO B2C/B2B</legend>
            <RadioColumn>
              <RadioLine><RadioDot />niedostępny</RadioLine>
              <RadioLine $mt={6}><RadioDot $on /><FocusText>dostępny w B2C i w B2B</FocusText></RadioLine>
              <RadioLine $mt={13} $off><RadioDot $off />dostępny tylko w B2B</RadioLine>
              <RadioLine $mt={9} $off><RadioDot $off />dostępny tylko w B2C</RadioLine>
            </RadioColumn>
          </GroupBox>
          <CheckColumn>
            <CheckLine><span />Artykuł aktywny w systemach zewnętrznych</CheckLine>
            <CheckLine><span />Dostępny w systemach aukcyjnych</CheckLine>
          </CheckColumn>
        </LowerRow>
      </TabPage>
      <DialogFooter>
        <FooterAction>Ctrl+P<ActionButton $w={94}>Pola dodatkowe</ActionButton></FooterAction>
        <FooterAction>Ctrl+Z<ActionButton $w={64}>Zdjęcia</ActionButton></FooterAction>
        <Spacer />
        <FooterAction>F10<ActionButton $w={58}>Zapisz</ActionButton></FooterAction>
        <FooterAction>Esc<ActionButton $w={58}>Anuluj</ActionButton></FooterAction>
      </DialogFooter>
      <Callout />
    </Dialog>
  </Page>
);

export default App;
